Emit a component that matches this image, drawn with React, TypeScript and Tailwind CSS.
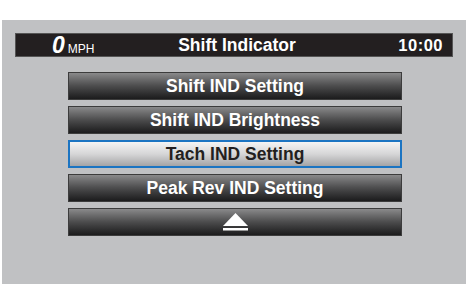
import React from "react";

const items = [
  "Shift IND Setting",
  "Shift IND Brightness",
  "Tach IND Setting",
  "Peak Rev IND Setting",
];

function MenuButton({
  label,
  selected,
}: {
  label: React.ReactNode;
  selected?: boolean;
}) {
  if (selected) {
    return (
      <div className="h-[28px] flex items-center justify-center border-2 border-[#1b74c2] bg-gradient-to-b from-[#f4f4f4] via-[#d6d6d7] to-[#a4a4a6] text-[#231f20] text-[17.5px] font-bold">
        {label}
      </div>
    );
  }
  return (
    <div className="h-[28px] flex items-center justify-center border border-[#3c3c3c] bg-gradient-to-b from-[#8a8a8b] via-[#4c4c4d] to-[#1c1c1d] text-white text-[17.5px] font-bold">
      {label}
    </div>
  );
}

function EjectIcon() {
  return (
    <svg width="27" height="18" viewBox="0 0 27 18">
      <polygon points="13.5,0 26,13 1,13" fill="#fff" />
      <rect x="1" y="15" width="25" height="2.5" fill="#fff" />
    </svg>
  );
}

export default function App() {
  return (
    <div
      className="w-[467px] h-[300px] bg-white pt-[20px] pl-[2px] pr-[1px]"
      style={{ fontFamily: '"Liberation Sans", Arial, sans-serif' }}
    >
      <div className="h-[264px] bg-[#c0c1c3] pt-[13px] px-[12px]">
        {/* header */}
        <div className="h-[24px] mx-[1px] bg-[#231f20] border border-[#555] flex items-center text-white">
          <div className="w-[100px] flex items-baseline pl-[36px]">
            <span className="text-[23px] font-bold italic leading-none">0</span>
            <span className="text-[12px] ml-[3px] leading-none">MPH</span>
          </div>
          <div className="flex-1 text-center text-[17.5px] font-bold pl-[6px]">
            Shift Indicator
          </div>
          <div className="w-[100px] text-right pr-[9px] text-[16.5px] font-bold tracking-[0.5px]">
            10:00
          </div>
        </div>

        {/* menu */}
        <div className="mt-[15px] ml-[54px] w-[334px] flex flex-col gap-[6px]">
          {items.map((it, i) => (
            <MenuButton key={it} label={it} selected={i === 2} />
          ))}
          <MenuButton label={<EjectIcon />} />
        </div>
      </div>
    </div>
  );
}
